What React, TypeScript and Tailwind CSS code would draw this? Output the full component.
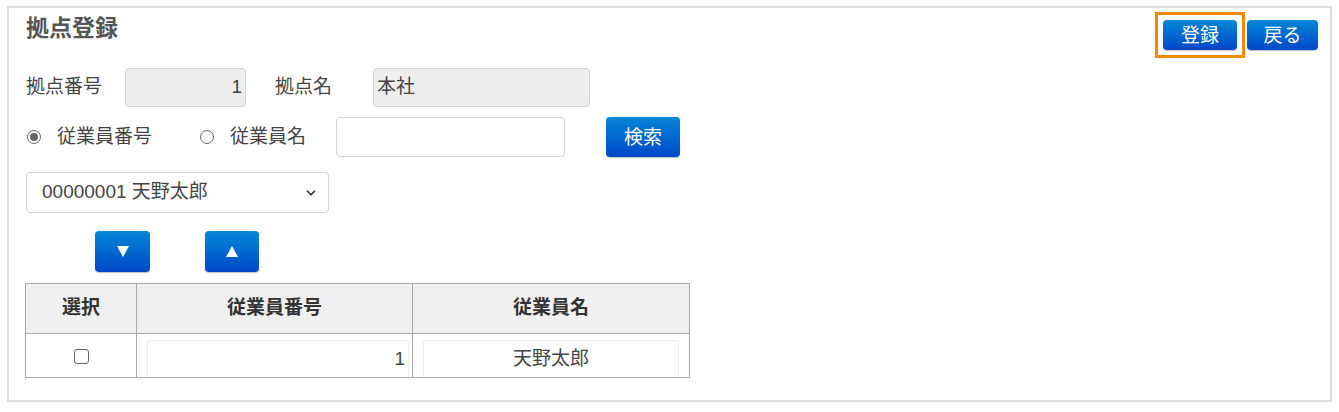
import { ChevronDown } from 'lucide-react'

const font = { fontFamily: '"Liberation Sans", "Noto Sans CJK JP", sans-serif' }

const blueBtn =
  'rounded-[4px] bg-gradient-to-b from-[#0b86d6] to-[#0046c8] text-white text-[19px] leading-none flex items-center justify-center shadow-[0_1px_1px_rgba(0,0,0,0.25)]'

export default function App() {
  return (
    <main className="w-[1339px] h-[412px] bg-white pt-[6px] pl-[7px] text-[#444]" style={font}>
      <div className="w-[1325px] h-[396px] border-2 border-[#dcdcdc] pl-[17px] pr-[12px] pt-[8px]">
        <div className="flex items-start justify-between h-[44px]">
          <h1 className="text-[23px] leading-none font-bold text-[#555] mt-[1px]">拠点登録</h1>
          <div className="flex items-center gap-[2px]">
            <div className="border-[3px] border-[#f08a00] px-[5px] pt-[5px] pb-[5px] -mt-[4px]">
              <button className={`${blueBtn} w-[74px] h-[30px]`}>登録</button>
            </div>
            <button className={`${blueBtn} w-[71px] h-[30px] -mt-[4px]`}>戻る</button>
          </div>
        </div>

        <div className="flex items-center mt-[8px] text-[19px]">
          <span className="w-[99px]">拠点番号</span>
          <div className="w-[121px] h-[39px] rounded-[4px] bg-[#eeeeee] border border-[#d4d4d4] flex items-center justify-end pr-[3px]">1</div>
          <span className="ml-[29px] w-[98px]">拠点名</span>
          <div className="w-[217px] h-[39px] rounded-[4px] bg-[#eeeeee] border border-[#d4d4d4] flex items-center pl-[3px]">本社</div>
        </div>

        <div className="flex items-center mt-[10px] text-[19px]">
          <span className="w-[14px] h-[14px] rounded-full border border-[#666] flex items-center justify-center ml-[1px]">
            <span className="w-[8px] h-[8px] rounded-full bg-[#666]" />
          </span>
          <span className="ml-[16px] w-[143px]">従業員番号</span>
          <span className="w-[14px] h-[14px] rounded-full border border-[#666]" />
          <span className="ml-[16px] w-[106px]">従業員名</span>
          <div className="w-[229px] h-[40px] rounded-[4px] border border-[#d4d4d4] bg-white" />
          <button className={`${blueBtn} ml-[41px] w-[74px] h-[40px]`}>検索</button>
        </div>

        <div className="mt-[15px] w-[303px] h-[41px] rounded-[4px] border border-[#d4d4d4] flex items-center justify-between pl-[15px] pr-[10px] text-[19px]">
          <span>00000001 天野太郎</span>
          <ChevronDown className="w-[14px] h-[14px] text-[#333]" strokeWidth={3} />
        </div>

        <div className="flex mt-[18px]">
          <button className={`${blueBtn} ml-[69px] w-[55px] h-[41px]`}>
            <span className="w-0 h-0 border-l-[6px] border-r-[6px] border-t-[11px] border-l-transparent border-r-transparent border-t-white" />
          </button>
          <button className={`${blueBtn} ml-[55px] w-[54px] h-[41px]`}>
            <span className="w-0 h-0 border-l-[6px] border-r-[6px] border-b-[11px] border-l-transparent border-r-transparent border-b-white" />
          </button>
        </div>

        <table className="mt-[11px] -ml-[1px] border-collapse text-[19px]">
          <thead>
            <tr className="bg-[#f0f0f0] h-[50px]">
              <th className="w-[111px] border border-[#a8a8a8] font-bold text-[#333]">選択</th>
              <th className="w-[276px] border border-[#a8a8a8] font-bold text-[#333]">従業員番号</th>
              <th className="w-[277px] border border-[#a8a8a8] font-bold text-[#333]">従業員名</th>
            </tr>
          </thead>
          <tbody>
            <tr className="h-[44px]">
              <td className="border border-[#a8a8a8] text-center">
                <span className="inline-block w-[15px] h-[15px] rounded-[3px] border border-[#666] align-middle" />
              </td>
              <td className="border border-[#a8a8a8] pl-[10px] pr-[3px] pt-[6px] align-top">
                <div className="h-[37px] rounded-t-[4px] border border-b-0 border-[#ececec] flex items-center justify-end pr-[3px]">1</div>
              </td>
              <td className="border border-[#a8a8a8] pl-[10px] pr-[10px] pt-[6px] align-top">
                <div className="h-[37px] rounded-t-[4px] border border-b-0 border-[#ececec] flex items-center justify-center">天野太郎</div>
              </td>
            </tr>
          </tbody>
        </table>
      </div>
    </main>
  )
}
